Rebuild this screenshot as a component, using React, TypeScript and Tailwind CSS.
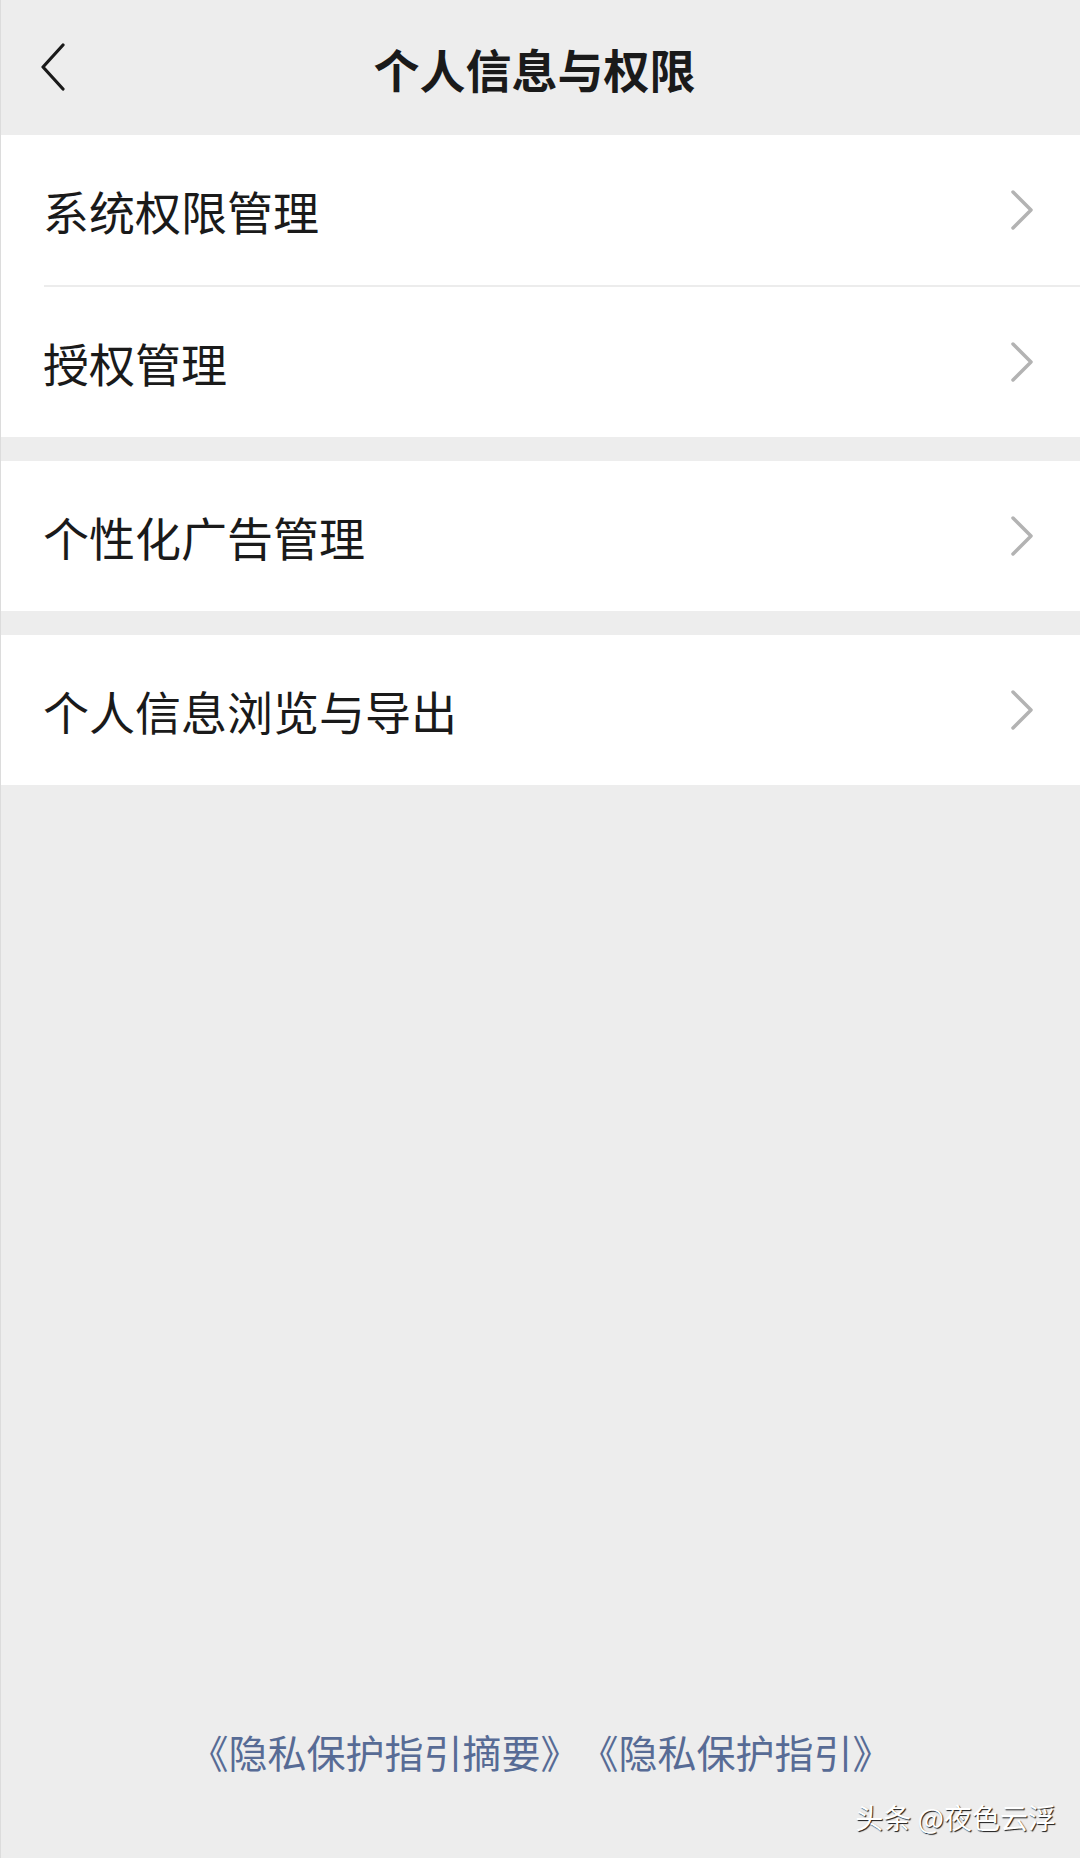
const font = { fontFamily: '"Noto Sans CJK SC", "Noto Sans", sans-serif' };

interface Item {
  label: string;
}

const groups: Item[][] = [
  [{ label: "系统权限管理" }, { label: "授权管理" }],
  [{ label: "个性化广告管理" }],
  [{ label: "个人信息浏览与导出" }],
];

function Chevron() {
  return (
    <svg width="24" height="40" viewBox="0 0 24 40" fill="none">
      <polyline points="3,2 21,20 3,38" stroke="#b3b3b3" strokeWidth="3.5" strokeLinecap="round" strokeLinejoin="round" />
    </svg>
  );
}

function Row({ label }: Item) {
  return (
    <div className="flex h-[150px] items-center justify-between bg-white pl-[42px] pr-[46px]">
      <span className="text-[46px] leading-none text-[#1a1a1a]">{label}</span>
      <Chevron />
    </div>
  );
}

export default function App() {
  return (
    <div className="flex min-h-[1858px] w-[1080px] flex-col border-l border-[#dcdcdc] bg-[#ededed]" style={font}>
      {/* header */}
      <div className="grid h-[135px] grid-cols-[1fr_auto_1fr] items-center">
        <div className="pl-[37px]">
          <svg width="30" height="50" viewBox="0 0 30 50" fill="none">
            <polyline points="25,2 5,24 25,46" stroke="#1a1a1a" strokeWidth="3.2" strokeLinecap="round" strokeLinejoin="round" />
          </svg>
        </div>
        <h1 className="pr-[12px] text-[46px] font-bold leading-none text-[#1a1a1a]">个人信息与权限</h1>
        <div />
      </div>

      {/* groups */}
      <div className="flex flex-col gap-[24px]">
        {groups.map((g, gi) => (
          <div key={gi} className="bg-white">
            {g.map((it, i) => (
              <div key={it.label}>
                {i > 0 && <div className="ml-[43px] h-[2px] bg-[#ececec]" />}
                <Row label={it.label} />
              </div>
            ))}
          </div>
        ))}
      </div>

      <div className="flex-1" />

      {/* footer links */}
      <div className="flex h-[40px] items-center justify-center text-[39px] leading-none text-[#576b95]">
        <span>《隐私保护指引摘要》</span>
        <span>《隐私保护指引》</span>
      </div>
      <div className="flex h-[87px] items-start justify-end pr-[24px] pt-[32px]">
        <span className="text-[28px] leading-[28px] text-white [text-shadow:1px_1px_1px_rgba(0,0,0,0.9)]">头条 @夜色云浮</span>
      </div>
    </div>
  );
}
